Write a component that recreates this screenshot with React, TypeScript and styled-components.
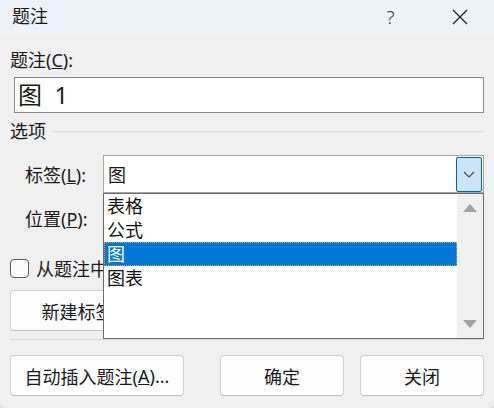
import React from 'react';
import styled, { createGlobalStyle } from 'styled-components';

const Global = createGlobalStyle`
  html, body {
    margin: 0;
    padding: 0;
    background: #e4e4e4;
  }
  body {
    font-family: 'Noto Sans', 'Noto Sans CJK SC', sans-serif;
    font-size: 18px;
    color: #1a1a1a;
  }
`;

const Window = styled.div`
  width: 494px;
  height: 408px;
  background: #f0f0f0;
  border-radius: 0 0 8px 8px;
  overflow: hidden;
  display: flex;
  flex-direction: column;
`;

const TitleBar = styled.div`
  height: 33px;
  background: #eef2f9;
  display: flex;
  align-items: center;
  padding-left: 12px;
`;

const Title = styled.div`
  flex: 1;
  font-size: 18px;
  line-height: 33px;
`;

const TitleButton = styled.div`
  width: 69px;
  height: 33px;
  display: flex;
  align-items: center;
  justify-content: center;
  font-size: 19px;
  font-weight: 300;
  color: #333;
`;

const Body = styled.div`
  flex: 1;
  padding: 15px 10px 0 10px;
  display: flex;
  flex-direction: column;
`;

const Label = styled.div`
  line-height: 24px;
  height: 24px;
  white-space: nowrap;
`;

const TextBox = styled.div`
  margin: 5px 0 0 4px;
  height: 36px;
  box-sizing: border-box;
  border: 1px solid #8a8a8a;
  background: #fff;
  font-size: 24px;
  line-height: 34px;
  padding-left: 3px;
  white-space: pre;
`;

const Section = styled.div`
  margin-top: 6px;
  display: flex;
  align-items: center;
  gap: 6px;
  line-height: 24px;
`;

const Rule = styled.div`
  flex: 1;
  height: 1px;
  background: #dadada;
`;

const FieldRow = styled.div<{ $top: number }>`
  margin-top: ${(p) => p.$top}px;
  padding-left: 15px;
  display: flex;
  align-items: center;
  height: 38px;
`;

const FieldLabel = styled.div`
  width: 78px;
  flex: none;
  white-space: nowrap;
`;

const Combo = styled.div`
  position: relative;
  flex: 1;
  height: 38px;
  box-sizing: border-box;
  border: 1px solid #a6a6a6;
  background: #fff;
  display: flex;
  align-items: center;
  padding-left: 4px;
`;

const ComboText = styled.div`
  flex: 1;
`;

const DropButton = styled.div`
  position: absolute;
  right: 1px;
  top: 1px;
  bottom: 0;
  width: 26px;
  box-sizing: border-box;
  background: #cce4f7;
  border: 1px solid #0063b1;
  border-radius: 2px;
  display: flex;
  align-items: center;
  justify-content: center;
`;

const DropList = styled.div`
  position: absolute;
  left: -1px;
  right: -1px;
  top: 37px;
  height: 146px;
  box-sizing: border-box;
  border: 1px solid #6b6b6b;
  background: #fff;
  display: flex;
  z-index: 2;
`;

const Items = styled.div`
  flex: 1;
  display: flex;
  flex-direction: column;
`;

const Item = styled.div<{ $selected?: boolean }>`
  height: 24px;
  line-height: 24px;
  padding-left: 3px;
  background: ${(p) => (p.$selected ? '#0078d7' : 'transparent')};
  color: ${(p) => (p.$selected ? '#fff' : '#111')};
  outline: ${(p) => (p.$selected ? '1px dotted #e8a040' : 'none')};
  outline-offset: -1px;
`;

const ScrollBar = styled.div`
  width: 26px;
  background: #f0f0f0;
  display: flex;
  flex-direction: column;
  justify-content: space-between;
  align-items: center;
  padding: 10px 0 10px;
`;

const Arrow = styled.div<{ $down?: boolean }>`
  width: 0;
  height: 0;
  border-left: 7px solid transparent;
  border-right: 7px solid transparent;
  ${(p) =>
    p.$down
      ? 'border-top: 8px solid #a3a3a3;'
      : 'border-bottom: 8px solid #a3a3a3;'}
`;

const CheckRow = styled.div`
  margin-top: 19px;
  height: 24px;
  display: flex;
  align-items: center;
  gap: 7px;
`;

const CheckBox = styled.div`
  width: 19px;
  height: 19px;
  box-sizing: border-box;
  border: 1px solid #5c5c5c;
  border-radius: 4px;
  background: #fbfbfb;
`;

const Button = styled.div<{ $width: number }>`
  width: ${(p) => p.$width}px;
  height: 41px;
  box-sizing: border-box;
  border: 1px solid #d0d0d0;
  border-bottom-color: #bdbdbd;
  border-radius: 4px;
  background: #fdfdfd;
  display: flex;
  align-items: center;
  justify-content: center;
  white-space: nowrap;
`;

const NewRow = styled.div`
  margin-top: 10px;
  display: flex;
`;

const Separator = styled.div`
  margin-top: 8px;
  height: 1px;
  background: #d9d9d9;
`;

const Footer = styled.div`
  margin-top: 15px;
  display: flex;
  gap: 16px;
`;

const Spacer = styled.div`
  flex: 1;
`;

const Chevron = () => (
  <svg width="12" height="7" viewBox="0 0 12 7">
    <path d="M1 1 L6 6 L11 1" fill="none" stroke="#4a4a4a" strokeWidth="1.1" />
  </svg>
);

const CloseIcon = () => (
  <svg width="16" height="16" viewBox="0 0 16 16">
    <path d="M1 1 L15 15 M15 1 L1 15" stroke="#222" strokeWidth="1.3" />
  </svg>
);

export default function App() {
  return (
    <>
      <Global />
      <Window>
        <TitleBar>
          <Title>题注</Title>
          <TitleButton>?</TitleButton>
          <TitleButton>
            <CloseIcon />
          </TitleButton>
        </TitleBar>
        <Body>
          <Label>
            题注(<u>C</u>):
          </Label>
          <TextBox>图  1</TextBox>
          <Section>
            选项
            <Rule />
          </Section>
          <FieldRow $top={12}>
            <FieldLabel>
              标签(<u>L</u>):
            </FieldLabel>
            <Combo>
              <ComboText>图</ComboText>
              <DropButton>
                <Chevron />
              </DropButton>
              <DropList>
                <Items>
                  <Item>表格</Item>
                  <Item>公式</Item>
                  <Item $selected>图</Item>
                  <Item>图表</Item>
                </Items>
                <ScrollBar>
                  <Arrow />
                  <Arrow $down />
                </ScrollBar>
              </DropList>
            </Combo>
          </FieldRow>
          <FieldRow $top={6}>
            <FieldLabel>
              位置(<u>P</u>):
            </FieldLabel>
            <Combo />
          </FieldRow>
          <CheckRow>
            <CheckBox />
            从题注中排除标签(<u>E</u>)
          </CheckRow>
          <NewRow>
            <Button $width={174}>
              新建标签(<u>N</u>)...
            </Button>
          </NewRow>
          <Separator />
          <Footer>
            <Button $width={174}>
              自动插入题注(<u>A</u>)...
            </Button>
            <Spacer />
            <Button $width={124}>确定</Button>
            <Button $width={124}>关闭</Button>
          </Footer>
        </Body>
      </Window>
    </>
  );
}
